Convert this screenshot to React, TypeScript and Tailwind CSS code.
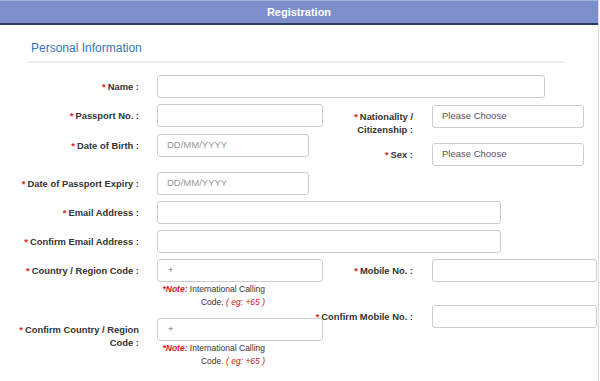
import React from "react";

const Req = () => <span className="text-[#e0231b] mr-[2px]">*</span>;

const Label = ({
  children,
  className = "",
}: {
  children: React.ReactNode;
  className?: string;
}) => (
  <div
    className={`shrink-0 pt-[5px] text-right text-[9.4px] leading-[13px] font-bold text-[#333] ${className}`}
  >
    <Req />
    {children}
  </div>
);

const Field = ({
  text,
  className = "",
  textClass = "text-[#888]",
}: {
  text?: string;
  className?: string;
  textClass?: string;
}) => (
  <div
    className={`h-[23px] shrink-0 rounded-[3px] border border-[#ccc] bg-white pl-[9px] flex items-center text-[9.5px] ${textClass} ${className}`}
  >
    {text}
  </div>
);

const Note = () => (
  <div className="w-[108px] pt-[1px] text-right text-[8.5px] leading-[13px] text-[#333]">
    <div>
      <span className="italic font-bold text-[#d0141b]">*Note:</span>
      <span> International Calling</span>
    </div>
    <div>
      <span>Code. </span>
      <span className="italic text-[#d0141b]">( eg: +65 )</span>
    </div>
  </div>
);

export default function App() {
  return (
    <div
      className="w-[599px] h-[381px] bg-white border-r border-[#d9d9d9] overflow-hidden"
      style={{ fontFamily: '"Liberation Sans", Arial, sans-serif' }}
    >
      {/* Header */}
      <div className="h-[25px] bg-[#7d8fcb] border-t border-[#a6b2de] border-b-2 border-b-[#2e3a5e] flex items-center justify-center">
        <span className="text-[11px] font-bold text-white">Registration</span>
      </div>

      {/* Section title */}
      <div className="mx-[27px] mt-[15px] w-[538px] border-b-2 border-[#eeeeee] pb-[5px] pl-[4px]">
        <h2 className="text-[12px] leading-[16px] text-[#2f78b7]">Personal Information</h2>
      </div>

      <div className="pl-[15px]">
        {/* Name */}
        <div className="mt-[12px] flex items-start">
          <Label className="w-[124px]">Name :</Label>
          <Field className="ml-[18px] w-[388px]" />
        </div>

        {/* Passport / DOB + Nationality / Sex */}
        <div className="mt-[6px] flex items-start">
          <div className="w-[308px] shrink-0">
            <div className="flex items-start">
              <Label className="w-[124px]">Passport No. :</Label>
              <Field className="ml-[18px] w-[166px]" />
            </div>
            <div className="mt-[7px] flex items-start">
              <Label className="w-[124px]">Date of Birth :</Label>
              <Field className="ml-[18px] w-[152px]" text="DD/MM/YYYY" textClass="text-[#999]" />
            </div>
          </div>
          <div className="ml-[10px] mt-[1px]">
            <div className="flex items-start">
              <Label className="w-[80px]">
                Nationality / Citizenship :
              </Label>
              <Field className="ml-[19px] w-[152px]" text="Please Choose" textClass="text-[#555]" />
            </div>
            <div className="mt-[7px] flex items-start">
              <Label className="w-[80px]">Sex :</Label>
              <Field className="ml-[19px] w-[152px]" text="Please Choose" textClass="text-[#555]" />
            </div>
          </div>
        </div>

        {/* Passport expiry */}
        <div className="mt-[6px] flex items-start">
          <Label className="w-[124px]">Date of Passport Expiry :</Label>
          <Field className="ml-[18px] w-[152px]" text="DD/MM/YYYY" textClass="text-[#999]" />
        </div>

        {/* Email */}
        <div className="mt-[6px] flex items-start">
          <Label className="w-[124px]">Email Address :</Label>
          <Field className="ml-[18px] w-[344px]" />
        </div>
        <div className="mt-[6px] flex items-start">
          <Label className="w-[124px]">Confirm Email Address :</Label>
          <Field className="ml-[18px] w-[344px]" />
        </div>

        {/* Country code + Mobile */}
        <div className="mt-[6px] flex items-start">
          <div className="w-[308px] shrink-0">
            <div className="flex items-start">
              <Label className="w-[124px]">Country / Region Code :</Label>
              <div className="ml-[18px]">
                <Field className="w-[166px]" text="+" textClass="text-[#777] pl-[10px]" />
                <Note />
              </div>
            </div>
            <div className="mt-[9px] flex items-start">
              <Label className="w-[124px]">Confirm Country / Region Code :</Label>
              <div className="ml-[18px]">
                <Field className="w-[166px]" text="+" textClass="text-[#777] pl-[10px]" />
                <Note />
              </div>
            </div>
          </div>
          <div className="ml-[10px]">
            <div className="flex items-start">
              <Label className="w-[80px]">Mobile No. :</Label>
              <Field className="ml-[19px] w-[165px]" />
            </div>
            <div className="mt-[23px] flex items-start">
              <div className="w-[80px] shrink-0 flex justify-end">
                <Label className="whitespace-nowrap">Confirm Mobile No. :</Label>
              </div>
              <Field className="ml-[19px] w-[165px]" />
            </div>
          </div>
        </div>
      </div>
    </div>
  );
}
